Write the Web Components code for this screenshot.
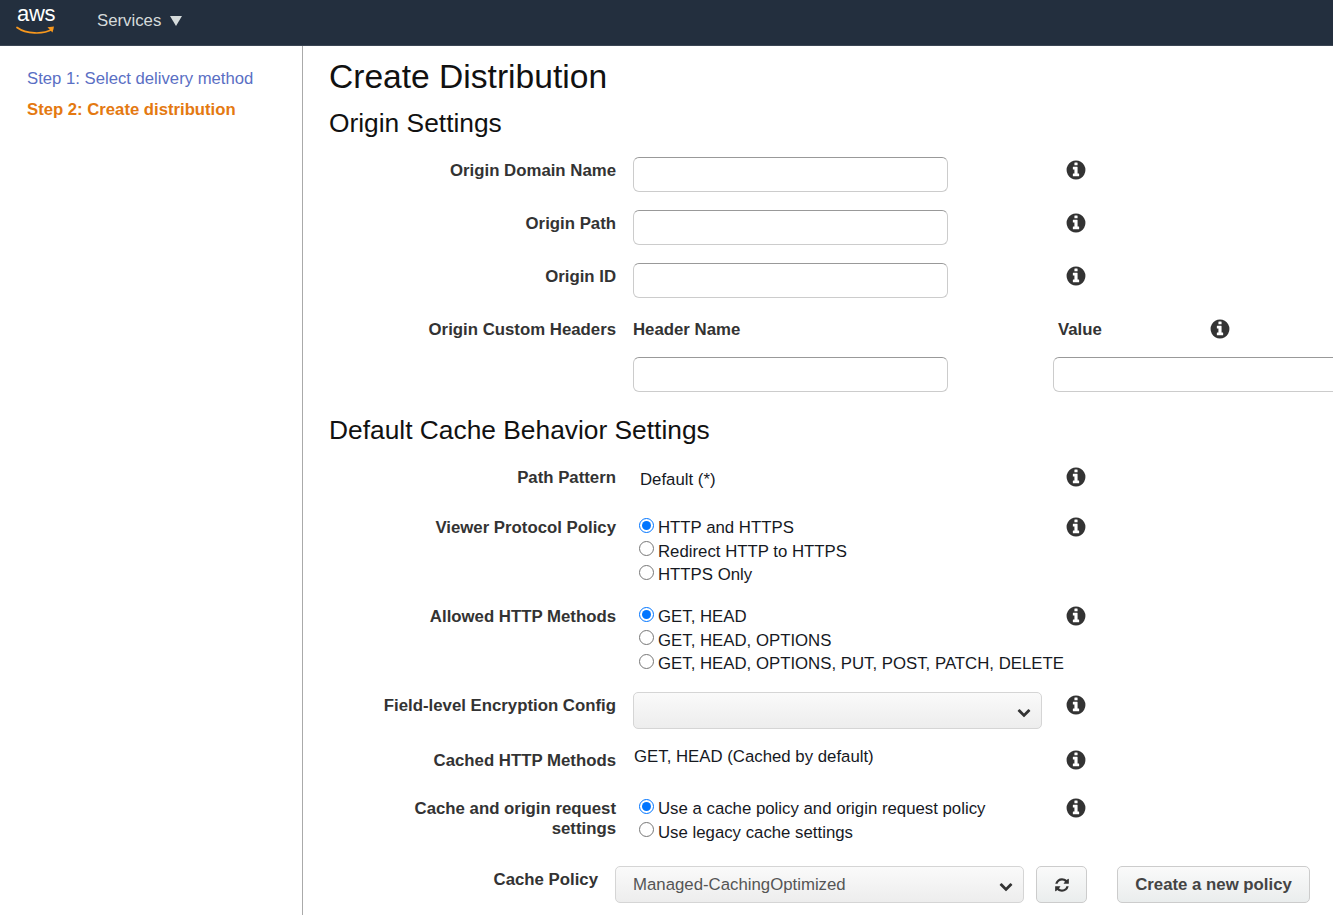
<!DOCTYPE html>
<html lang="en">
<head>
<meta charset="utf-8">
<title>Create Distribution</title>
<style>
  html, body { margin: 0; height: 100%; overflow: hidden; background: #fff; }
  body { font-family: "Liberation Sans", Arial, sans-serif; font-size: 16.8px; color: #16191f; }
</style>
</head>
<body>
<console-page>
  <aws-header slot="header"></aws-header>
  <step-nav slot="nav">
    <a>Step 1: Select delivery method</a>
    <a class="current">Step 2: Create distribution</a>
  </step-nav>

  <h-title>Create Distribution</h-title>
  <section-title style="--top:11px;--bottom:19px">Origin Settings</section-title>

  <form-row label="Origin Domain Name" info gap="18"><text-input></text-input></form-row>
  <form-row label="Origin Path" info gap="18"><text-input></text-input></form-row>
  <form-row label="Origin ID" info gap="18"><text-input></text-input></form-row>
  <headers-row></headers-row>

  <section-title style="--top:23px;--bottom:19px">Default Cache Behavior Settings</section-title>

  <form-row label="Path Pattern" info gap="24"><plain-value indent="7" pad="6">Default (*)</plain-value></form-row>
  <form-row label="Viewer Protocol Policy" info gap="16">
    <radio-group name="viewer" options="HTTP and HTTPS|Redirect HTTP to HTTPS|HTTPS Only"></radio-group>
  </form-row>
  <form-row label="Allowed HTTP Methods" info gap="16">
    <radio-group name="methods" options="GET, HEAD|GET, HEAD, OPTIONS|GET, HEAD, OPTIONS, PUT, POST, PATCH, DELETE"></radio-group>
  </form-row>
  <form-row label="Field-level Encryption Config" info gap="18">
    <select-box width="409"></select-box>
  </form-row>
  <form-row label="Cached HTTP Methods" info gap="24"><plain-value pad="0">GET, HEAD (Cached by default)</plain-value></form-row>
  <form-row label="Cache and origin request settings" info gap="21.6">
    <radio-group name="cache" options="Use a cache policy and origin request policy|Use legacy cache settings"></radio-group>
  </form-row>
  <policy-row></policy-row>
</console-page>

<script>
const ICONS = {
  info: 'M1152 1376v-160q0-14-9-23t-23-9h-96v-512q0-14-9-23t-23-9h-320q-14 0-23 9t-9 23v160q0 14 9 23t23 9h96v320h-96q-14 0-23 9t-9 23v160q0 14 9 23t23 9h448q14 0 23-9t9-23zm-128-896v-160q0-14-9-23t-23-9h-192q-14 0-23 9t-9 23v160q0 14 9 23t23 9h192q14 0 23-9t9-23zm640 416q0 209-103 385.5t-279.5 279.5-385.5 103-385.5-103-279.5-279.5-103-385.5 103-385.5 279.5-279.5 385.5-103 385.5 103 279.5 279.5 103 385.5z',
  refresh: 'M1639 1056q0 5-1 7-64 268-268 434.5t-478 166.5q-146 0-282.5-55t-243.5-157l-129 129q-19 19-45 19t-45-19-19-45v-448q0-26 19-45t45-19h448q26 0 45 19t19 45-19 45l-137 137q71 66 161 102t187 36q134 0 250-65t186-179q11-17 53-117 8-23 30-23h192q13 0 22.5 9.5t9.5 22.5zm25-800v448q0 26-19 45t-45 19h-448q-26 0-45-19t-19-45 19-45l138-138q-148-137-349-137-134 0-250 65t-186 179q-11 17-53 117-8 23-30 23h-199q-13 0-22.5-9.5t-9.5-22.5v-7q65-268 270-434.5t480-166.5q146 0 284 55.500t245 156.500l130-129q19-19 45-19t45 19 19 45z',
  chevron: 'M1683 808l-742 741q-19 19-45 19t-45-19l-742-741q-19-19-19-45.500t19-45.500l166-165q19-19 45-19t45 19l531 531 531-531q19-19 45-19t45 19l166 165q19 19 19 45.500t-19 45.500z'
};

function icon(name, size, color) {
  return `<svg width="${size}" height="${size}" viewBox="0 0 1792 1792" fill="${color}" aria-hidden="true"><path d="${ICONS[name]}"/></svg>`;
}

class Base extends HTMLElement {
  render(html) {
    if (!this.shadowRoot) this.attachShadow({ mode: 'open' });
    this.shadowRoot.innerHTML = html;
  }
}

customElements.define('console-page', class extends Base {
  connectedCallback() {
    this.render(`
      <style>
        :host { display: grid; grid-template-rows: 46px 1fr; height: 915px; width: 1333px; overflow: hidden; }
        .body { display: grid; grid-template-columns: 303px 1fr; min-height: 0; overflow: hidden; }
        main { padding: 0 0 0 26px; overflow: hidden; min-width: 0; }
      </style>
      <slot name="header"></slot>
      <div class="body">
        <slot name="nav"></slot>
        <main><slot></slot></main>
      </div>
    `);
  }
});

customElements.define('aws-header', class extends Base {
  connectedCallback() {
    this.render(`
      <style>
        :host { display: flex; align-items: flex-start; height: 45px; background: #232f3e; border-bottom: 1px solid #3b4654; color: #d5dbdb; }
        .logo { width: 40px; margin: 3px 0 0 16px; height: 32px; }
        .logo span { display: block; font-size: 22px; line-height: 22px; color: #fff; padding-left: 1px; letter-spacing: -0.3px; }
        .logo svg { display: block; margin-top: 0; }
        .services { margin: 11px 0 0 41px; display: flex; align-items: center; gap: 9px; line-height: 19px; }
      </style>
      <div class="logo">
        <span>aws</span>
        <svg width="40" height="11" viewBox="0 0 40 11">
          <path d="M1 2.500C10 9 27 10 36.500 4" fill="none" stroke="#f8981d" stroke-width="1.700" stroke-linecap="round"/>
          <path d="M31.500 2.300l6.500-.8-1.500 6z" fill="#f8981d"/>
        </svg>
      </div>
      <div class="services">Services
        <svg width="12" height="10" viewBox="0 0 12 10"><path d="M0 0h12L6 10z" fill="#d5dbdb"/></svg>
      </div>
    `);
  }
});

customElements.define('step-nav', class extends Base {
  connectedCallback() {
    this.render(`
      <style>
        :host { display: flex; flex-direction: column; gap: 12px; padding: 23px 0 0 27px; border-right: 1px solid #aaa; box-sizing: border-box; height: 100%; font-size: 16.7px; }
        ::slotted(a) { line-height: 19px; color: #5a6fc4; }
        ::slotted(a.current) { color: #e47911; font-weight: bold; }
      </style>
      <slot></slot>
    `);
  }
});

customElements.define('h-title', class extends Base {
  connectedCallback() {
    this.render(`
      <style>
        :host { display: block; font-size: 33.6px; line-height: 40px; margin-top: 11px; color: #111; }
      </style>
      <slot></slot>
    `);
  }
});

customElements.define('section-title', class extends Base {
  connectedCallback() {
    this.render(`
      <style>
        :host { display: block; font-size: 26.35px; line-height: 30px; color: #111; margin: var(--top, 0) 0 var(--bottom, 0); }
      </style>
      <slot></slot>
    `);
  }
});

customElements.define('info-icon', class extends Base {
  connectedCallback() {
    this.render(`
      <style>:host { display: block; width: 22px; height: 22px; line-height: 0; margin-top: 2px; }</style>
      ${icon('info', 22, '#333')}
    `);
  }
});

customElements.define('form-row', class extends Base {
  connectedCallback() {
    const hasInfo = this.hasAttribute('info');
    this.render(`
      <style>
        :host { display: grid; grid-template-columns: 287px 415px 22px; column-gap: 17px; align-items: start; margin-bottom: ${this.getAttribute('gap') || 0}px; }
        .label { font-weight: bold; line-height: 20px; text-align: right; color: #333; padding: 4px 0 0 40px; }
        .field { min-width: 0; }
      </style>
      <div class="label">${this.getAttribute('label')}</div>
      <div class="field"><slot></slot></div>
      ${hasInfo ? '<info-icon></info-icon>' : ''}
    `);
  }
});

customElements.define('text-input', class extends Base {
  connectedCallback() {
    this.render(`
      <style>
        :host { display: block; width: 315px; }
        input { display: block; width: 100%; height: 35px; box-sizing: border-box; padding: 0 8px; background: #fff; border: 1px solid #ccc; border-top-color: #999; border-radius: 6px; outline: none; font: inherit; }
      </style>
      <input type="text">
    `);
  }
});

customElements.define('plain-value', class extends Base {
  connectedCallback() {
    this.render(`
      <style>
        :host { display: block; line-height: 20px; color: #16191f; padding: ${this.getAttribute('pad') || 0}px 0 0 ${this.getAttribute('indent') || 1}px; white-space: nowrap; }
      </style>
      <slot></slot>
    `);
  }
});

customElements.define('radio-group', class extends Base {
  connectedCallback() {
    const name = this.getAttribute('name');
    const rows = this.getAttribute('options').split('|').map((text, i) => `
      <label><input type="radio" name="${name}"${i === 0 ? ' checked' : ''}><span>${text}</span></label>
    `).join('');
    this.render(`
      <style>
        :host { display: block; padding: 2px 0 0 6px; white-space: nowrap; }
        label { display: flex; align-items: center; height: 23.7px; color: #16191f; }
        input { margin: 0 4px 0 0; width: 15px; height: 15px; flex: none; position: relative; top: -3px; }
        label:first-of-type input { top: -2px; }
      </style>
      ${rows}
    `);
  }
});

customElements.define('select-box', class extends Base {
  connectedCallback() {
    const width = this.getAttribute('width') || 409;
    this.render(`
      <style>
        :host { display: block; position: relative; width: ${width}px; height: 37px; }
        select { appearance: none; -webkit-appearance: none; display: block; width: 100%; height: 100%; box-sizing: border-box; padding: 0 36px 0 17px; border: 1px solid #d5d5d5; border-radius: 5px; background: linear-gradient(#fafafa, #ededed); color: #555; font: 16.8px "Liberation Sans", Arial, sans-serif; outline: none; }
        .chevron { position: absolute; right: 11px; top: 13px; line-height: 0; pointer-events: none; }
      </style>
      <select><option>${this.getAttribute('value') || ''}</option></select>
      <span class="chevron">${icon('chevron', 14, '#333')}</span>
    `);
  }
});

customElements.define('headers-row', class extends Base {
  connectedCallback() {
    this.render(`
      <style>
        :host { display: grid; grid-template-columns: 287px 437px 1fr; row-gap: 17px; white-space: nowrap; }
        .label, .head { font-weight: bold; line-height: 20px; color: #333; padding-top: 4px; }
        .label { text-align: right; }
        .head { padding-left: 17px; }
        .value { display: flex; gap: 107px; padding-left: 5px; }
        .value .head { padding-left: 0; }
        .first { grid-column: 2; margin-left: 17px; }
        .wide { width: 400px; }
      </style>
      <div class="label">Origin Custom Headers</div>
      <div class="head">Header Name</div>
      <div class="value"><span class="head">Value</span><info-icon></info-icon></div>
      <div class="first"><text-input></text-input></div>
      <div><text-input class="wide"></text-input></div>
    `);
  }
});

customElements.define('policy-row', class extends Base {
  connectedCallback() {
    this.render(`
      <style>
        :host { display: flex; align-items: flex-start; }
        .label { width: 269px; font-weight: bold; line-height: 20px; color: #333; text-align: right; padding-top: 4px; margin-right: 17px; }
        select-box { margin-right: 12px; }
        button { height: 37px; box-sizing: border-box; border: 1px solid #ccc; border-radius: 5px; background: linear-gradient(#fafafa, #eaeded); font: bold 16.8px "Liberation Sans", Arial, sans-serif; color: #444; padding: 0; display: flex; align-items: center; justify-content: center; }
        .refresh { width: 51px; margin-right: 30px; }
        .create { width: 193px; }
      </style>
      <div class="label">Cache Policy</div>
      <select-box width="409" value="Managed-CachingOptimized"></select-box>
      <button class="refresh">${icon('refresh', 16, '#333')}</button>
      <button class="create">Create a new policy</button>
    `);
  }
});
</script>
</body>
</html>
